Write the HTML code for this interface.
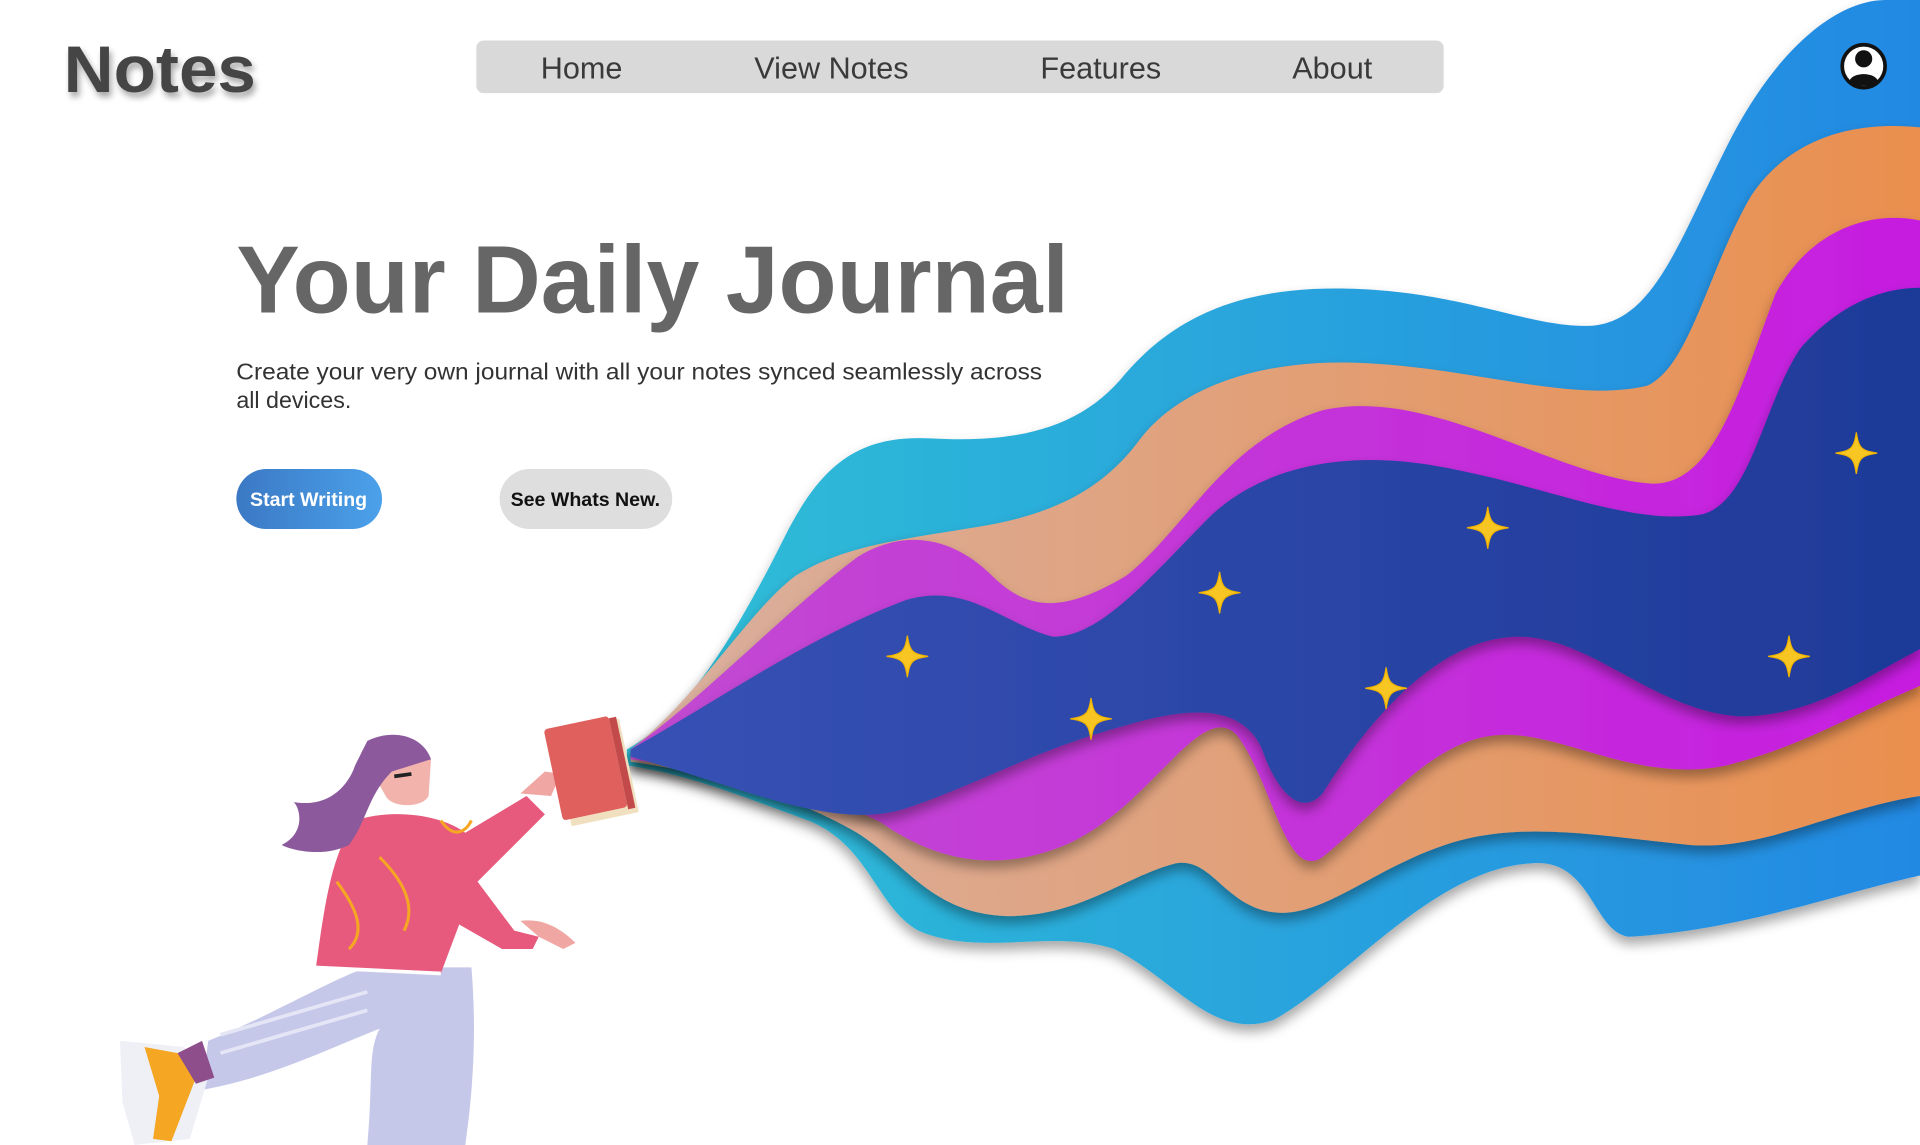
<!DOCTYPE html>
<html><head><meta charset="utf-8"><style>
html,body{margin:0;padding:0;background:#fff;overflow:hidden}
svg{display:block}
</style></head><body>
<svg width="1920" height="1145" viewBox="0 0 1568 935" xmlns="http://www.w3.org/2000/svg" font-family="Liberation Sans, sans-serif">
<defs>
<linearGradient id="gBlue" x1="0" y1="0" x2="1" y2="0"><stop offset="0" stop-color="#2fbfd6"/><stop offset="1" stop-color="#2389e3"/></linearGradient>
<linearGradient id="gOr" x1="0" y1="0" x2="1" y2="0"><stop offset="0" stop-color="#d9b0a0"/><stop offset="1" stop-color="#ea8f4e"/></linearGradient>
<linearGradient id="gMag" x1="0" y1="0" x2="1" y2="0"><stop offset="0" stop-color="#c24ad2"/><stop offset="1" stop-color="#c61de0"/></linearGradient>
<linearGradient id="gNav" x1="0" y1="0" x2="1" y2="0"><stop offset="0" stop-color="#3751b5"/><stop offset="1" stop-color="#1e3a98"/></linearGradient>
<linearGradient id="gBtn" x1="0" y1="0" x2="1" y2="0"><stop offset="0" stop-color="#3b78c4"/><stop offset="1" stop-color="#4ba1ea"/></linearGradient>
<filter id="sh" x="-10%" y="-10%" width="120%" height="120%"><feDropShadow dx="0" dy="6" stdDeviation="5" flood-color="#000" flood-opacity="0.35"/></filter>
<filter id="ts"><feDropShadow dx="2" dy="4" stdDeviation="2.5" flood-color="#000" flood-opacity="0.35"/></filter>
<path id="star" d="M0,-17 C2,-4 4,-2 17,0 C4,2 2,4 0,17 C-2,4 -4,2 -17,0 C-4,-2 -2,-4 0,-17Z"/>
</defs>

<path filter="url(#sh)" fill="url(#gBlue)" d="M512,612 C560,585 600,520 640,440 C670,380 700,355 760,358 C830,362 880,350 915,310 C960,255 1020,232 1110,236 C1200,240 1250,268 1300,266 C1350,262 1370,200 1410,120 C1450,40 1500,0 1540,0 L1568,0 L1568,715 C1500,730 1420,760 1330,765 C1300,760 1300,700 1250,705 C1170,710 1100,800 1040,833 C990,850 960,800 910,775 C860,758 800,782 750,760 C715,740 710,690 660,670 C600,648 560,632 512,625Z"/>
<path filter="url(#sh)" fill="url(#gOr)" d="M515,612 C570,570 610,500 650,470 C690,445 740,440 800,430 C860,420 900,400 930,360 C960,320 1020,295 1100,296 C1200,298 1280,330 1345,315 C1380,300 1395,220 1430,160 C1460,115 1510,98 1568,104 L1568,650 C1500,660 1440,695 1380,690 C1300,682 1240,670 1180,690 C1120,710 1080,750 1040,745 C1000,740 990,700 960,705 C920,715 880,750 820,748 C760,745 740,705 700,680 C640,645 570,630 515,622Z"/>
<path filter="url(#sh)" fill="url(#gMag)" d="M515,612 C580,565 640,500 700,455 C740,430 780,440 810,470 C840,500 870,500 920,470 C970,430 1000,360 1080,335 C1170,315 1270,390 1350,395 C1400,395 1420,320 1450,240 C1480,185 1530,172 1568,180 L1568,560 C1510,585 1470,610 1410,625 C1340,640 1280,600 1230,600 C1170,600 1130,660 1080,700 C1050,720 1040,640 1010,600 C980,570 940,660 870,690 C810,715 760,700 720,672 C660,640 580,630 515,620Z"/>
<path filter="url(#sh)" fill="url(#gNav)" d="M515,612 C590,570 660,520 740,490 C790,475 820,510 860,520 C900,520 940,470 990,420 C1040,375 1110,370 1170,380 C1260,395 1330,430 1390,420 C1430,410 1440,330 1470,285 C1500,250 1535,235 1568,235 L1568,530 C1520,555 1480,585 1420,585 C1350,580 1300,520 1240,520 C1170,520 1110,600 1080,648 C1060,670 1040,640 1030,610 C1010,570 960,580 910,595 C840,615 800,640 740,660 C680,680 600,640 515,618Z"/>

<g fill="#f7c623" stroke="#f0b400" stroke-width="1">
<use href="#star" transform="translate(741,536)"/>
<use href="#star" transform="translate(891,587)"/>
<use href="#star" transform="translate(996,484)"/>
<use href="#star" transform="translate(1132,562)"/>
<use href="#star" transform="translate(1215,431)"/>
<use href="#star" transform="translate(1461,536)"/>
<use href="#star" transform="translate(1516,370)"/>
</g>

<text x="52" y="75" font-size="54" font-weight="bold" fill="#444" filter="url(#ts)" textLength="157" lengthAdjust="spacingAndGlyphs">Notes</text>
<rect x="389" y="33" width="790" height="43" rx="6" fill="#d9d9d9"/>
<g font-size="25" fill="#3a3a3a" text-anchor="middle">
<text x="475" y="64">Home</text>
<text x="679" y="64">View Notes</text>
<text x="899" y="64">Features</text>
<text x="1088" y="64">About</text>
</g>
<circle cx="1522" cy="54" r="17.5" fill="#fff" stroke="#111" stroke-width="3"/>
<circle cx="1522" cy="48" r="7" fill="#111"/>
<path d="M1510,68 C1510,58 1534,58 1534,68 L1530,70 L1514,70Z" fill="#111"/>

<text x="193" y="255" font-size="78" font-weight="bold" fill="#666" textLength="680" lengthAdjust="spacingAndGlyphs">Your Daily Journal</text>
<text x="193" y="310" font-size="19" fill="#333" textLength="658" lengthAdjust="spacingAndGlyphs">Create your very own journal with all your notes synced seamlessly across</text>
<text x="193" y="333" font-size="19" fill="#333">all devices.</text>
<rect x="193" y="383" width="119" height="49" rx="24.5" fill="url(#gBtn)"/>
<text x="252" y="413" font-size="16" font-weight="bold" fill="#fff" text-anchor="middle">Start Writing</text>
<rect x="408" y="383" width="141" height="49" rx="24.5" fill="#dedede"/>
<text x="478" y="413" font-size="16" font-weight="bold" fill="#111" text-anchor="middle">See Whats New.</text>

<path d="M170,850 C220,830 270,800 300,790 L385,790 C390,850 385,900 380,935 L300,935 C305,880 300,860 310,840 C260,860 220,880 165,890Z" fill="#c6c8ea"/>
<path d="M180,845 L300,810 M180,860 L300,825" stroke="#e4e5f5" stroke-width="3" fill="none"/>
<path d="M98,850 L150,855 L170,880 L155,930 L110,935 L100,900Z" fill="#eef0f6"/>
<path d="M118,855 L145,860 L160,880 L140,932 L125,930 L130,895Z" fill="#f5a623"/>
<path d="M145,860 L165,850 L175,880 L160,885Z" fill="#8e4e8c"/>
<path d="M290,670 C320,660 360,665 380,680 L430,650 L445,665 L390,720 L420,760 L440,765 L435,775 L410,775 L375,755 L360,795 L258,790 C265,740 270,700 290,670Z" fill="#e75a7d"/>
<path d="M275,720 C290,740 300,760 285,775 M310,700 C330,720 340,740 330,760 M360,670 C370,685 380,680 385,670" stroke="#f5a623" stroke-width="2.5" fill="none"/>
<path d="M258,790 L360,795" stroke="#fff" stroke-width="3"/>
<path d="M425,752 C440,750 455,755 470,770 L460,775 L440,765Z" fill="#f0a7a4"/>
<path d="M425,648 L445,630 L458,632 L450,650Z" fill="#f0a7a4"/>
<path d="M295,615 C300,600 340,600 352,620 L350,650 C345,660 320,660 315,650Z" fill="#f2b3ad"/>
<path d="M300,605 C320,595 345,600 352,620 L320,630 C300,650 300,670 285,690 C265,700 240,695 230,690 C250,680 245,660 240,655 C270,660 285,640 290,625Z" fill="#8c5a9c"/>
<path d="M322,634 L336,632" stroke="#222" stroke-width="3"/>

<g transform="rotate(-12 485 630)">
<rect x="458" y="592" width="56" height="78" fill="#f0e0c0"/>
<rect x="452" y="588" width="54" height="76" rx="3" fill="#e0605e"/>
<rect x="506" y="590" width="6" height="76" fill="#c24a4a"/>
</g>
</svg>
</body></html>
